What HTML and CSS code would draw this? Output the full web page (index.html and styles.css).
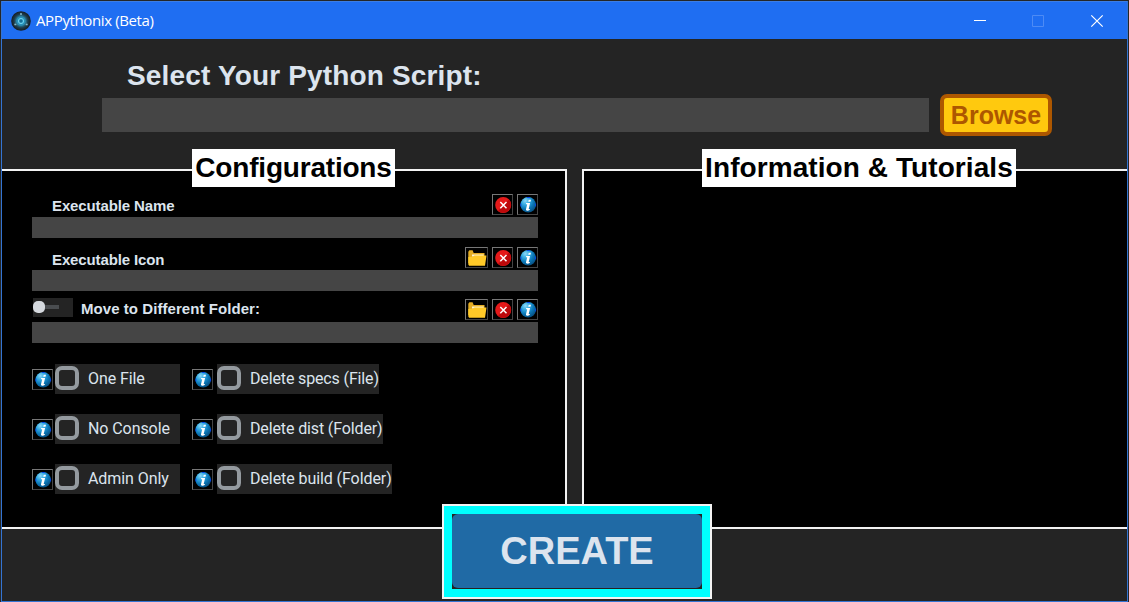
FILE: index.html
```html
<!DOCTYPE html>
<html lang="en">
<head>
<meta charset="utf-8">
<title>APPythonix (Beta)</title>
<link rel="stylesheet" href="styles.css">
</head>
<body>
<svg class="defs" width="0" height="0" aria-hidden="true">
  <defs>
    <radialGradient id="blue" cx="32%" cy="24%" r="80%">
      <stop offset="0" stop-color="#8fd8f8"/><stop offset=".3" stop-color="#38aee4"/><stop offset=".65" stop-color="#0b78b8"/><stop offset="1" stop-color="#075083"/>
    </radialGradient>
    <radialGradient id="logo"><stop offset="0" stop-color="#48b8e0"/><stop offset=".45" stop-color="#287f9f"/><stop offset=".7" stop-color="#1d3c4c"/><stop offset="1" stop-color="#151b20"/></radialGradient>
    <symbol id="info" viewBox="0 0 17 17">
      <circle cx="8.2" cy="7.800" r="7.700" fill="url(#blue)"/>
      <path d="M7 .5h3M.8 6.500v3M15.600 6.500v3" stroke="#0648e8" stroke-width="1"/>
      <path d="M8.700 2.800h2.300l-.5 2H8.200zM6.200 6h3.900L8.700 11.900H10l-.4 1.200c-1.400.9-4 .8-3.600-.9L7.200 7.300H5.900z" fill="#fff"/>
    </symbol>
    <symbol id="cross" viewBox="0 0 17 17">
      <circle cx="8.200" cy="8" r="8" fill="#e51919"/>
      <path d="M14 2.600a8 8 0 0 1-11 11.500z" fill="#bd090b"/>
      <path d="M5.300 5l6.200 6.200M11.500 5l-6.200 6.200" stroke="#fff" stroke-width="1.500"/>
    </symbol>
    <symbol id="folder" viewBox="0 0 19 17">
      <path d="M.3 1.800 1.400.2h3.200L5.700 3H16.500v10H.3z" fill="#e5ad24"/>
      <path d="M4 4.500h11.700v2H4z" fill="#fff2cc"/>
      <path d="M5 6.700 6.500 5.500h12L17 15.800H1.100L.3 14.500V7z" fill="#ffc928"/>
    </symbol>
  </defs>
</svg>
<div class="window">
  <header class="titlebar">
    <svg class="logo" viewBox="0 0 20 20"><circle cx="10" cy="10" r="9.800" fill="url(#logo)"/><path d="M10 3 3.700 13.500h12.600z" fill="none" stroke="#377488" stroke-width=".6"/><circle cx="10" cy="10" r="4.600" fill="#2790b8"/><circle cx="10" cy="10" r="2.600" fill="none" stroke="#70d2ef" stroke-width="1"/><circle cx="10" cy="10" r="1.200" fill="#176d96"/><path d="M9 3h2M3.400 13.500h1.800M14.800 13.500h1.800" stroke="#82b7c8" stroke-width="1.500"/></svg>
    <span class="app-name">APPythonix (Beta)</span>
    <svg class="controls" viewBox="0 0 130 20" fill="none"><path d="M0 9.500h12" stroke="#fff"/><path d="M58.500 4.500h11v11h-11z" stroke="#4d8bf5"/><path d="m117.300 4.300 11.400 11.400m0-11.400-11.400 11.400" stroke="#fff" stroke-width="1.200"/></svg>
  </header>
  <section class="script">
    <h1 class="script-title">Select Your Python Script:</h1>
    <div class="script-row"><div class="entry path"></div><button class="browse">Browse</button></div>
  </section>
  <main class="panels">
    <section class="panel config">
      <h2 class="legend config-legend">Configurations</h2>
      <div class="field">
        <div class="field-head"><span class="name">Executable Name</span><button class="tool"><svg><use href="#cross"/></svg></button><button class="tool"><svg><use href="#info"/></svg></button></div>
        <div class="entry"></div>
      </div>
      <div class="field second">
        <div class="field-head"><span class="name low">Executable Icon</span><button class="tool wide"><svg><use href="#folder"/></svg></button><button class="tool"><svg><use href="#cross"/></svg></button><button class="tool"><svg><use href="#info"/></svg></button></div>
        <div class="entry"></div>
      </div>
      <div class="field third">
        <div class="field-head"><svg class="switch" viewBox="0 0 40 19"><path fill="#242424" d="M0 0h40v19H0z"/><path fill="#4a4d50" d="M10 7h16v4H10z"/><rect y="3" width="12" height="12" rx="5" fill="#d5d9de"/></svg><span class="name move">Move to Different Folder:</span><button class="tool wide"><svg><use href="#folder"/></svg></button><button class="tool"><svg><use href="#cross"/></svg></button><button class="tool"><svg><use href="#info"/></svg></button></div>
        <div class="entry"></div>
      </div>
      <div class="options">
        <button class="tool"><svg><use href="#info"/></svg></button><label class="check"><i class="box"></i><span>One File</span></label>
        <button class="tool"><svg><use href="#info"/></svg></button><label class="check specs"><i class="box"></i><span>Delete specs (File)</span></label>
        <button class="tool"><svg><use href="#info"/></svg></button><label class="check"><i class="box"></i><span>No Console</span></label>
        <button class="tool"><svg><use href="#info"/></svg></button><label class="check dist"><i class="box"></i><span>Delete dist (Folder)</span></label>
        <button class="tool"><svg><use href="#info"/></svg></button><label class="check"><i class="box"></i><span>Admin Only</span></label>
        <button class="tool"><svg><use href="#info"/></svg></button><label class="check build"><i class="box"></i><span>Delete build (Folder)</span></label>
      </div>
    </section>
    <section class="panel tutorials"><h2 class="legend info-legend">Information &amp; Tutorials</h2></section>
  </main>
  <div class="create-frame"><div class="create-back"><button class="create">CREATE</button></div></div>
</div>
</body>
</html>
```
FILE: styles.css
```css
* { box-sizing: border-box; }
body { margin: 0; padding: 1px 1px 0; height: 602px; overflow: hidden; background: #242628; font-family: "Liberation Sans", Arial, sans-serif; }
button, h1, h2 { margin: 0; padding: 0; font: inherit; border: 0; }
.defs { position: absolute; }
.window { position: relative; height: 601px; border: 1px solid #3474d2; border-top: 0; background: #242424; }
.titlebar { height: 38px; display: flex; align-items: center; padding: 0 23px 0 9px; background: #1f6ef2; border-top: 1px solid #3c7de5; }
.logo { width: 20px; height: 20px; }
.app-name { margin: -2px 0 0 5px; color: #fff; font: 15px "Open Sans", sans-serif; letter-spacing: -.38px; white-space: nowrap; }
.controls { width: 130px; height: 20px; margin-left: auto; }
.script { height: 130px; padding: 20px 75px 0 100px; }
.script-title { height: 35px; padding-left: 25px; color: #dce4ee; font-size: 28px; line-height: 34px; font-weight: bold; letter-spacing: .16px; white-space: nowrap; }
.script-row { display: flex; gap: 11px; }
.entry { height: 21px; background: #454545; }
.path { width: 827px; height: 34px; margin-top: 4px; }
.browse { width: 112px; height: 42px; border: 4px solid #ad5700; border-radius: 7px; background: #ffc90e; color: #ad5700; font-size: 25px; font-weight: bold; line-height: 34px; }
.panels { display: flex; gap: 15px; height: 360px; }
.panel { position: relative; border: 2px solid #f3f3f3; background: #000; }
.config { width: 565px; border-left: 0; padding: 23px 27px 0 30px; }
.tutorials { flex: 1; border-right: 0; }
.legend { position: absolute; top: -22px; height: 38px; background: #fff; color: #000; font-size: 28px; font-weight: bold; line-height: 37px; text-align: center; white-space: nowrap; }
.config-legend { left: 190px; width: 203px; letter-spacing: -.2px; }
.info-legend { left: 118px; width: 314px; letter-spacing: .08px; }
.field { height: 44px; }
.second { margin-top: 9px; }
.third { margin-top: 8px; }
.field-head { display: flex; align-items: flex-start; height: 23px; gap: 4px; }
.name { flex: 1; padding: 2px 0 0 20px; color: #dce4ee; font-size: 15px; line-height: 19px; font-weight: bold; letter-spacing: -.12px; white-space: nowrap; }
.low { padding-top: 3px; }
.move { padding: 0 0 0 4px; letter-spacing: .06px; }
.switch { width: 40px; height: 19px; margin: -1px 0 0 1px; }
.tool { flex: none; display: flex; width: 21px; height: 21px; padding: 2px 0 0 2px; background: #000; border: 1px solid #777; border-right-color: #444; border-bottom-color: #444; }
.tool svg { flex: none; display: block; width: 17px; height: 17px; }
.tool.wide { width: 23px; }
.tool.wide svg { width: 19px; }
.options { display: grid; grid-template-columns: 23px 137px 25px 180px; grid-auto-rows: 30px; row-gap: 20px; align-items: start; margin-top: 21px; }
.options .tool { margin-top: 5px; }
.check { display: flex; width: 125px; height: 30px; background: #242424; color: #dce4ee; font: 16px/29px Roboto, sans-serif; letter-spacing: -.08px; white-space: nowrap; }
.box { flex: none; width: 24px; height: 24px; margin: 2px 9px 0 0; border: 4px solid #949a9f; border-radius: 7px; }
.specs { width: 162px; letter-spacing: -.14px; }
.dist { width: 166px; letter-spacing: -.13px; }
.build { width: 175px; }
.create-frame { position: absolute; left: 440px; top: 503px; width: 270px; height: 95px; border: 2px solid #f3f3f3; padding: 8px; background: #0ff; }
.create-back { height: 75px; background: #242424; }
.create { display: block; width: 250px; height: 74px; border-radius: 6px; background: #206aa5; color: #dce4ee; font-size: 38px; line-height: 73px; font-weight: bold; }
```
